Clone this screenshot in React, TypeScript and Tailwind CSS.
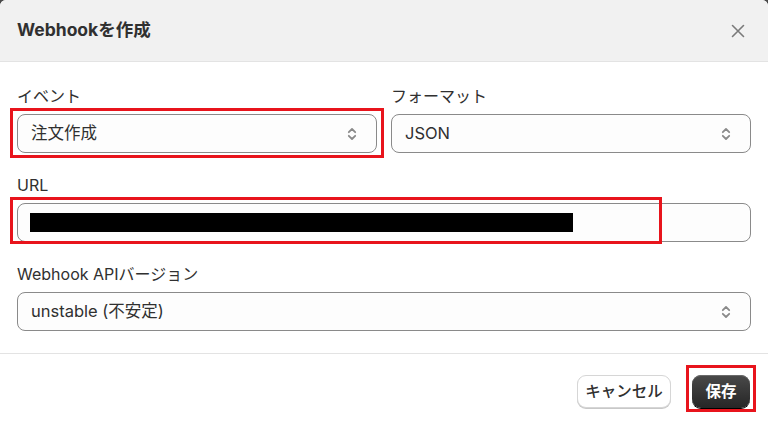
import React from "react";

function SelectChevron() {
  return (
    <svg width="10" height="16" viewBox="0 0 10 16" fill="none" stroke="#8a8a8a" strokeWidth="1.8" strokeLinecap="round" strokeLinejoin="round">
      <path d="M1.8 6.2 L5 3 L8.2 6.2" />
      <path d="M1.8 9.8 L5 13 L8.2 9.8" />
    </svg>
  );
}

function Field({ label, children }: { label: string; children: React.ReactNode }) {
  return (
    <div className="flex flex-col gap-2">
      <div className="text-[16px] leading-5 text-[#303030]">{label}</div>
      {children}
    </div>
  );
}

function SelectBox({ value, highlight }: { value: string; highlight?: boolean }) {
  return (
    <div className="relative">
      <div className="flex h-[39px] items-center justify-between rounded-[8px] border border-[#8a8a8a] bg-[#fdfdfd] pl-[13px] pr-[19px]">
        <span className="text-[16.5px] text-[#303030]">{value}</span>
        <SelectChevron />
      </div>
      {highlight && (
        <div className="pointer-events-none absolute -left-[7px] -right-[7px] -top-[6px] -bottom-[5px] border-[3px] border-[#e8141c]" />
      )}
    </div>
  );
}

export default function App() {
  return (
    <div
      className="h-[425px] w-[768px] overflow-hidden bg-[#4a4a4a]"
      style={{ fontFamily: 'Inter, "Noto Sans CJK JP", sans-serif' }}
    >
      <div className="flex h-full flex-col rounded-t-[6px] bg-white">
        <div className="flex h-[62px] items-center justify-between rounded-t-[6px] border-b border-[#e3e3e3] bg-[#f1f1f1] pl-[17px] pr-[23px]">
          <div className="text-[17.5px] font-bold text-[#303030]">Webhookを作成</div>
          <svg width="14" height="14" viewBox="0 0 14 14" stroke="#7a7a7a" strokeWidth="1.6" strokeLinecap="round">
            <path d="M1.5 1.5 L12.5 12.5 M12.5 1.5 L1.5 12.5" />
          </svg>
        </div>

        <div className="flex flex-col gap-[22px] border-b border-[#e3e3e3] px-[17px] pb-[22px] pt-[24px]">
          <div className="grid grid-cols-2 gap-[14px]">
            <Field label="イベント">
              <SelectBox value="注文作成" highlight />
            </Field>
            <Field label="フォーマット">
              <SelectBox value="JSON" />
            </Field>
          </div>

          <Field label="URL">
            <div className="relative">
              <div className="flex h-[39px] items-center rounded-[8px] border border-[#8a8a8a] bg-[#fdfdfd] pl-[12px]">
                <div className="h-[19px] w-[543px] bg-black" />
              </div>
              <div className="pointer-events-none absolute -left-[7px] -top-[6px] -bottom-[2px] w-[652px] border-[3px] border-[#e8141c]" />
            </div>
          </Field>

          <Field label="Webhook APIバージョン">
            <SelectBox value="unstable (不安定)" />
          </Field>
        </div>

        <div className="flex flex-1 justify-end gap-[21px] pr-[18px] pt-[21px]">
          <button className="h-[33px] w-[94px] rounded-[9px] border border-[#d6d6d6] bg-white text-[15.5px] font-medium text-[#303030] shadow-[0_1px_0_#c8c8c8]">
            キャンセル
          </button>
          <div className="relative h-[33px]">
            <button className="h-[33px] w-[58px] rounded-[9px] bg-gradient-to-b from-[#4a4a4a] to-[#262626] text-[15.5px] font-bold text-white shadow-[inset_0_1px_0_#6a6a6a,0_1px_0_#000]">
              保存
            </button>
            <div className="pointer-events-none absolute -left-[6px] -right-[6px] -top-[10px] -bottom-[4px] border-[3px] border-[#e8141c]" />
          </div>
        </div>
      </div>
    </div>
  );
}
